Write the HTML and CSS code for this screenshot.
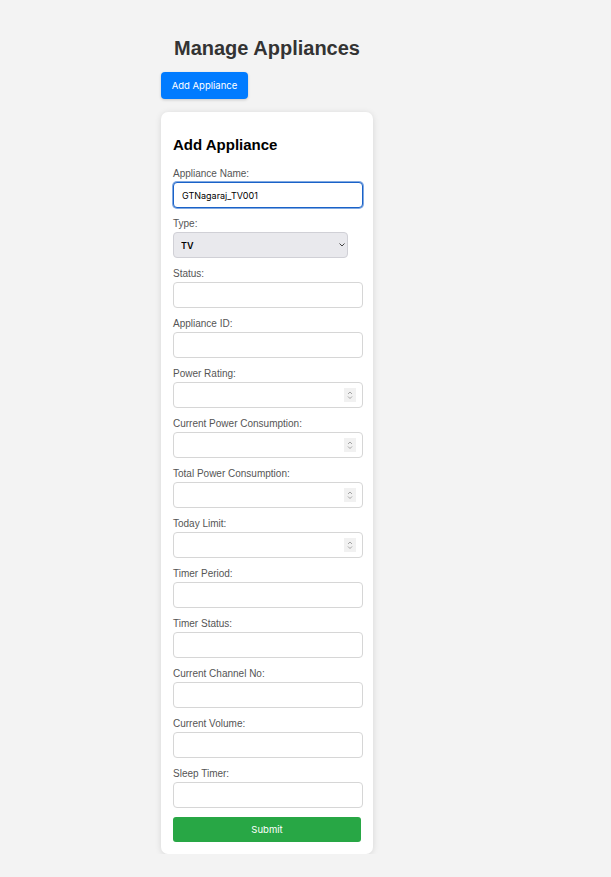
FILE: index.html
```html
<!DOCTYPE html>
<html lang="en">
<head>
<meta charset="utf-8">
<title>Manage Appliances</title>
<link rel="stylesheet" href="styles.css">
</head>
<body>
<div class="page">
  <h1 class="title">Manage Appliances</h1>
  <button class="btn-add" type="button">Add Appliance</button>
  <form class="card">
    <h2 class="card-title">Add Appliance</h2>
    <label class="lbl">Appliance Name:</label>
    <input class="inp inp-focus" type="text" value="GTNagaraj_TV001">
    <label class="lbl">Type:</label>
    <div class="sel-wrap">
      <select class="sel"><option>TV</option></select>
      <svg class="sel-arrow" width="6" height="4" viewBox="0 0 6 4"><path d="M0.5 0.5 L3 3 L5.5 0.5" fill="none" stroke="#444" stroke-width="1"/></svg>
    </div>
    <label class="lbl">Status:</label>
    <input class="inp" type="text">
    <label class="lbl">Appliance ID:</label>
    <input class="inp" type="text">
    <label class="lbl">Power Rating:</label>
    <div class="num-wrap">
      <input class="inp" type="number">
      <span class="spin"><svg width="12" height="14" viewBox="0 0 12 14"><path d="M4 6 L6 4 L8 6 M4 8.5 L6 10.5 L8 8.5" fill="none" stroke="#9a9a9a" stroke-width="0.9"/></svg></span>
    </div>
    <label class="lbl">Current Power Consumption:</label>
    <div class="num-wrap">
      <input class="inp" type="number">
      <span class="spin"><svg width="12" height="14" viewBox="0 0 12 14"><path d="M4 6 L6 4 L8 6 M4 8.5 L6 10.5 L8 8.5" fill="none" stroke="#9a9a9a" stroke-width="0.9"/></svg></span>
    </div>
    <label class="lbl">Total Power Consumption:</label>
    <div class="num-wrap">
      <input class="inp" type="number">
      <span class="spin"><svg width="12" height="14" viewBox="0 0 12 14"><path d="M4 6 L6 4 L8 6 M4 8.5 L6 10.5 L8 8.5" fill="none" stroke="#9a9a9a" stroke-width="0.9"/></svg></span>
    </div>
    <label class="lbl">Today Limit:</label>
    <div class="num-wrap">
      <input class="inp" type="number">
      <span class="spin"><svg width="12" height="14" viewBox="0 0 12 14"><path d="M4 6 L6 4 L8 6 M4 8.5 L6 10.5 L8 8.5" fill="none" stroke="#9a9a9a" stroke-width="0.9"/></svg></span>
    </div>
    <label class="lbl">Timer Period:</label>
    <input class="inp" type="text">
    <label class="lbl">Timer Status:</label>
    <input class="inp" type="text">
    <label class="lbl">Current Channel No:</label>
    <input class="inp" type="text">
    <label class="lbl">Current Volume:</label>
    <input class="inp" type="text">
    <label class="lbl">Sleep Timer:</label>
    <input class="inp inp-last" type="text">
    <button class="btn-submit" type="button">Submit</button>
  </form>
</div>
</body>
</html>
```

FILE: styles.css
```css
html, body {
  margin: 0;
  padding: 0;
  background: #f3f3f3;
}
.page {
  width: 212px;
  margin-left: 161px;
  padding-top: 36px;
  display: flex;
  flex-direction: column;
  align-items: flex-start;
  font-family: "Liberation Sans", Arial, sans-serif;
}
.title {
  align-self: stretch;
  text-align: center;
  margin: 0 0 12px 0;
  font-size: 20px;
  line-height: 24px;
  font-weight: bold;
  color: #333;
}
.btn-add {
  width: 87px;
  height: 27px;
  border: none;
  border-radius: 4px;
  background: #007bff;
  color: #fff;
  font-family: Inter, "Open Sans", sans-serif;
  font-size: 9.5px;
  padding: 0;
  box-shadow: 0 1px 3px rgba(0,0,0,0.18);
  margin-bottom: 13px;
}
.card {
  box-sizing: border-box;
  width: 212px;
  background: #fff;
  border-radius: 7px;
  box-shadow: 0 1px 6px rgba(0,0,0,0.12);
  padding: 24px 12px 12px 12px;
  display: flex;
  flex-direction: column;
  align-items: flex-start;
}
.card-title {
  margin: 0 0 14px 0;
  font-size: 15px;
  line-height: 18px;
  font-weight: bold;
  color: #000;
}
.lbl {
  display: block;
  font-size: 10px;
  line-height: 12px;
  color: #555;
  margin-bottom: 2px;
}
.inp {
  box-sizing: border-box;
  width: 190px;
  height: 26px;
  border: 1px solid #d6d6d6;
  border-radius: 4px;
  background: #fff;
  margin: 0 0 10px 0;
  padding: 0 8px;
  font-family: Inter, "Open Sans", sans-serif;
  font-size: 9px;
  color: #000;
  display: block;
}
.inp-focus {
  border-color: #1a62c8;
  box-shadow: 0 0 0 1px rgba(26,98,200,0.55);
  outline: none;
}
.inp-last {
  margin-bottom: 9px;
}
.num-wrap {
  position: relative;
}
.spin {
  position: absolute;
  top: 6px;
  right: 7px;
  width: 12px;
  height: 14px;
  background: #f1f1f1;
  display: flex;
}
.sel-wrap {
  position: relative;
  margin: 0 0 10px 0;
}
.sel {
  box-sizing: border-box;
  width: 175px;
  height: 26px;
  border: 1px solid #d0d0d6;
  border-radius: 4px;
  background: #e9e9ed;
  -webkit-appearance: none;
  appearance: none;
  padding: 0 7px;
  font-family: Inter, "Open Sans", sans-serif;
  font-size: 9px;
  font-weight: 600;
  color: #000;
  display: block;
}
.sel-arrow {
  position: absolute;
  top: 11px;
  left: 166px;
}
.btn-submit {
  width: 188px;
  height: 25px;
  border: none;
  border-radius: 3px;
  background: #28a745;
  color: #fff;
  font-family: Inter, "Open Sans", sans-serif;
  font-size: 9.5px;
  padding: 0;
}
```
